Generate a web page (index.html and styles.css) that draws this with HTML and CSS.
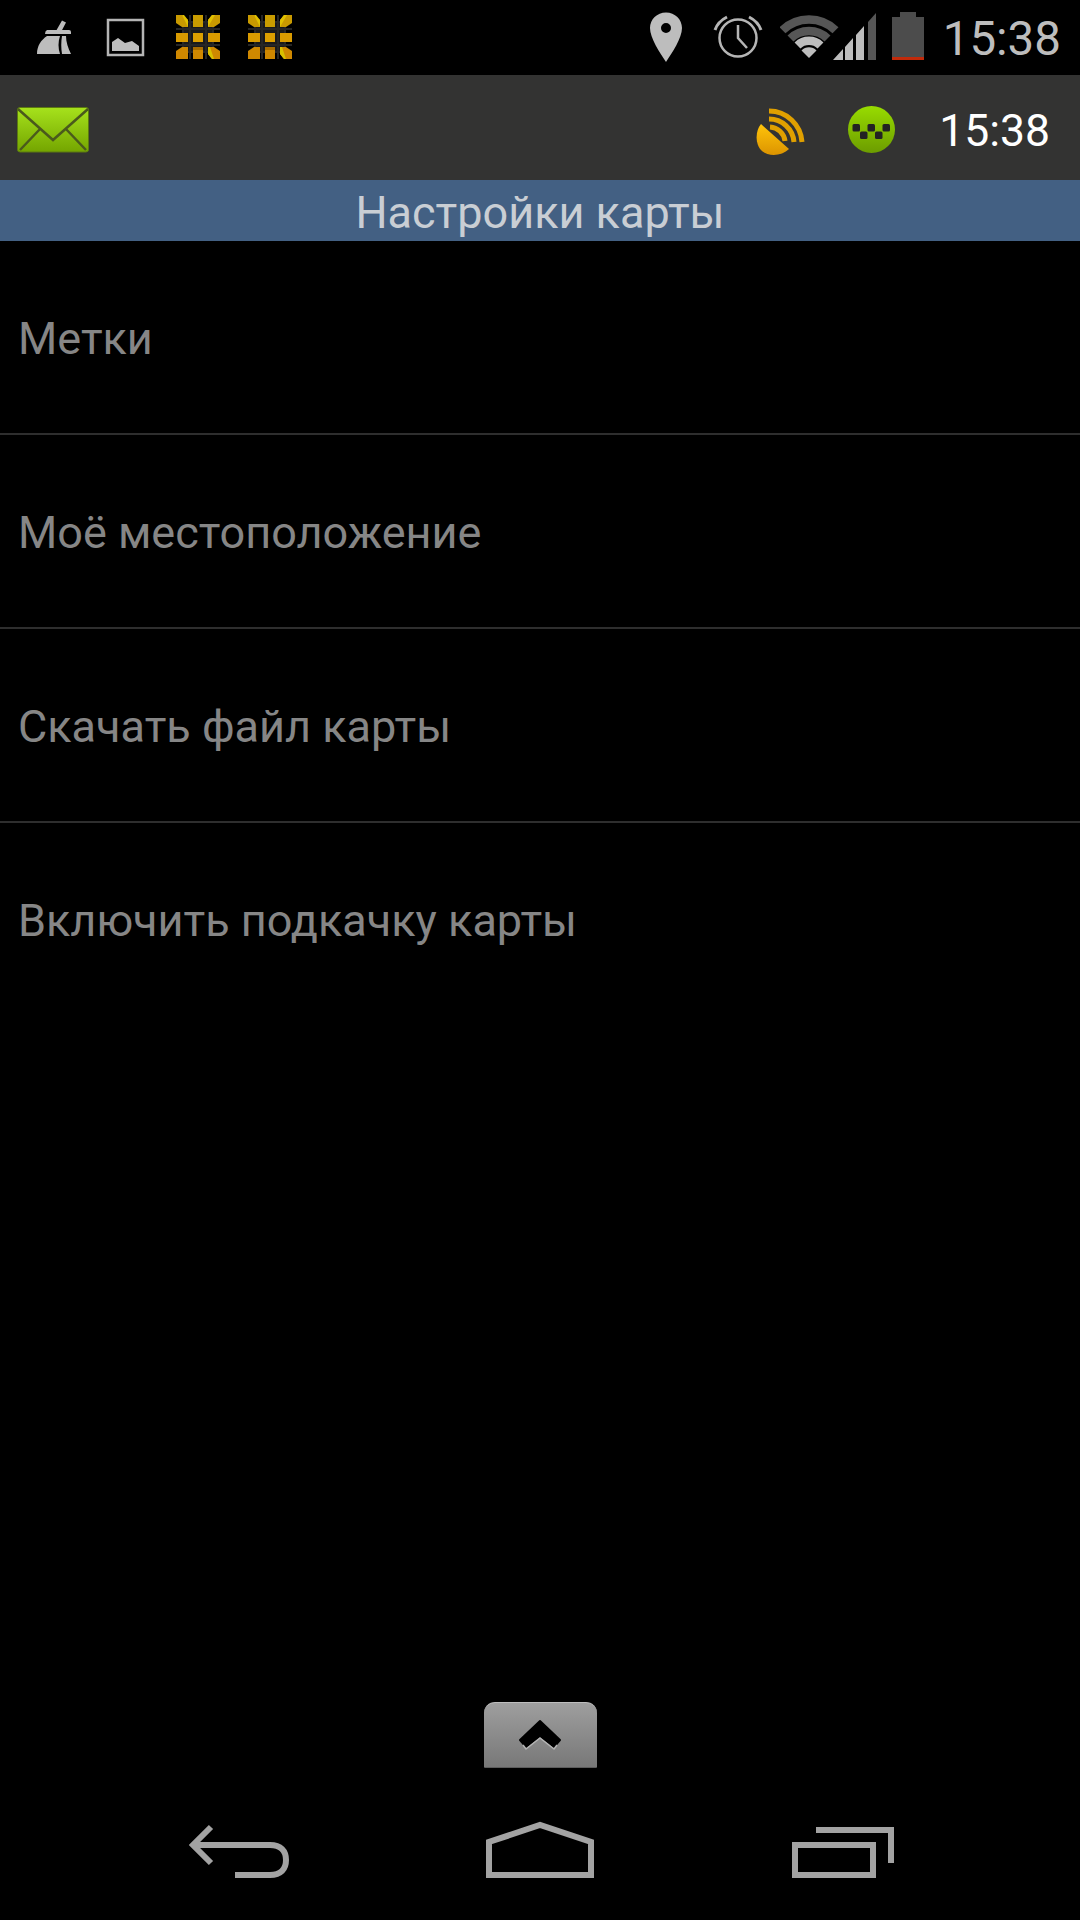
FILE: index.html
```html
<!DOCTYPE html>
<html lang="ru">
<head>
<meta charset="utf-8">
<title>Настройки карты</title>
<link rel="stylesheet" href="styles.css">
</head>
<body>
<svg class="defs" width="0" height="0" aria-hidden="true">
  <defs>
    <linearGradient id="gEnv" x1="0" y1="0" x2="0" y2="1"><stop offset="0" stop-color="#a6e21c"/><stop offset="1" stop-color="#74a500"/></linearGradient>
    <linearGradient id="gTaxi" x1="0" y1="0" x2="0" y2="1"><stop offset="0" stop-color="#98dc00"/><stop offset="1" stop-color="#6c9c00"/></linearGradient>
    <linearGradient id="gSat" x1="0" y1="0" x2="0" y2="1"><stop offset="0" stop-color="#ffc40a"/><stop offset="1" stop-color="#dc9400"/></linearGradient>
    <symbol id="tiles" viewBox="0 0 48 48">
      <path d="M9 9H39V39H9Z M16 2V46 M32 2V46 M2 16H46 M2 32H46" fill="#1a1a1a" stroke="#262626" stroke-width="2"/>
      <path d="M2 2H8L14 7V14H8L2 10Z" fill="#c99a00"/>
      <path d="M8 2H10L14 7V14Z" fill="#e0c000"/>
      <path d="M19 2H29V14H19Z" fill="#c99c00"/>
      <path d="M38 2H46V10L40 14H34V7Z" fill="#c99a00"/>
      <path d="M34 7L38 2H41L34 14Z" fill="#e0c000"/>
      <path d="M2 20H14V29H2Z" fill="#d89a00"/>
      <path d="M19 20H29V29H19Z" fill="#dc9f00"/>
      <path d="M34 20H46V29H34Z" fill="#d89a00"/>
      <path d="M8 34H14V46H2V38Z" fill="#cf8800"/>
      <path d="M19 34H29V46H19Z" fill="#cf8800"/>
      <path d="M19 34H29V37H19Z" fill="#a86c00"/>
      <path d="M34 34H40L46 38V46H38L34 41Z" fill="#cf8800"/>
      <path d="M34 34H36L40 46H38L34 41Z" fill="#d8c000"/>
    </symbol>
  </defs>
</svg>
<div class="screen">
  <header class="status">
    <div class="status-left">
      <svg class="ico w-broom" viewBox="35 0 38 75"><path d="M56 31L62 20.500L66 22.500L61 32Z M47 30H69Q71 30 71 32V34H45Q45 31 47 30Z M47 36H60C58 42 58 48 60 54H37C37 46 41 40 47 36Z M62 36H66C66 42 68 48 71 54H62C61 48 61 42 62 36Z" fill="#bdbdbd"/></svg>
      <svg class="ico w-pic gap-pic" viewBox="105 0 41 75"><rect x="108" y="20" width="35" height="35" fill="none" stroke="#b5b5b5" stroke-width="2.5"/><path d="M112 51V42L118 38L125 43L132 41L139 46V51Z" fill="#bdbdbd"/></svg>
      <svg class="ico w-grid gap-grid1" viewBox="0 -13 48 75"><use href="#tiles" width="48" height="48"/></svg>
      <svg class="ico w-grid gap-grid2" viewBox="0 -13 48 75"><use href="#tiles" width="48" height="48"/></svg>
    </div>
    <div class="status-right">
      <svg class="ico w-pin" viewBox="648 0 36 75"><path fill-rule="evenodd" d="M666 12.5C657 12.5 650 19.500 650 28C650 38 660 53 666 62C672 53 682 38 682 28C682 19.500 675 12.500 666 12.5ZM666 23A5 5 0 1 1 666 33A5 5 0 1 1 666 23Z" fill="#bdbdbd"/></svg>
      <svg class="ico w-alarm gap-alarm" viewBox="710 0 56 75"><g fill="none" stroke="#b5b5b5"><circle cx="738" cy="38" r="18.500" stroke-width="2.500"/><path d="M738 25V38L747 48" stroke-width="2.500"/><path d="M715 30C717 24 721 20 727 17M761 30C759 24 755 20 749 17" stroke-width="3"/></g></svg>
      <svg class="ico w-net gap-net" viewBox="780 0 98 75">
        <g fill="none" stroke-width="8.500">
          <path d="M782.500 30.200A38 38 0 0 1 835.500 30.200" stroke="#565656"/>
          <path d="M790.500 38.500A26.500 26.500 0 0 1 827.500 38.500" stroke="#565656"/>
          <path d="M797.500 45.500A16.500 16.500 0 0 1 820.500 45.500" stroke="#bdbdbd"/>
        </g>
        <path d="M809 58L801.500 50.500A10.500 10.500 0 0 1 816.500 50.500Z" fill="#bdbdbd"/>
        <path d="M833 60L843 49V60Z M845 47L853 38V60H845Z M856 35L864 26V60H856Z" fill="#bdbdbd"/>
        <path d="M868 22L876 13V60H868Z" fill="#565656"/>
      </svg>
      <svg class="ico w-batt gap-batt" viewBox="890 0 36 75"><path d="M900 12H916V17H924V57H892V17H900Z" fill="#4c4c4c"/><rect x="892" y="57" width="32" height="3" fill="#c22a0a"/></svg>
      <span class="status-time">15:38</span>
    </div>
  </header>

  <div class="appbar">
    <svg class="ico w-env" viewBox="15 75 76 105">
      <rect x="17.500" y="107.500" width="71" height="44.500" rx="2.500" fill="url(#gEnv)" stroke="#5c7a10" stroke-width="1"/>
      <path d="M18 109L53 140L88 109M41 128L20 150M65 128L86 150" fill="none" stroke="#4a5a1c" stroke-width="2.500"/>
    </svg>
    <div class="appbar-right">
      <svg class="ico w-sat" viewBox="752 75 56 105">
        <path d="M761 124L789 149C782 156 769 157 762 151C755 145 755 131 761 124Z" fill="url(#gSat)"/>
        <g fill="none" stroke="#e0a000" stroke-width="5">
          <path d="M769 111A33 33 0 0 1 802 142"/>
          <path d="M769 119A25 25 0 0 1 794 142"/>
          <path d="M770 127A16 16 0 0 1 785 141"/>
        </g>
      </svg>
      <svg class="ico w-taxi gap-taxi" viewBox="846 75 51 105">
        <circle cx="871.500" cy="129.500" r="23.500" fill="url(#gTaxi)"/>
        <g fill="#232323">
          <rect x="852.500" y="124" width="7.500" height="7.500" rx="1.500"/>
          <rect x="867.500" y="124" width="7.500" height="7.500" rx="1.500"/>
          <rect x="882.500" y="124" width="7.500" height="7.500" rx="1.500"/>
          <rect x="860" y="131.500" width="7.500" height="7.500" rx="1.500"/>
          <rect x="875" y="131.500" width="7.500" height="7.500" rx="1.500"/>
        </g>
      </svg>
      <span class="appbar-time">15:38</span>
    </div>
  </div>

  <div class="title">Настройки карты</div>

  <main class="list">
    <div class="row">Метки</div>
    <div class="row">Моё местоположение</div>
    <div class="row">Скачать файл карты</div>
    <div class="row">Включить подкачку карты</div>
  </main>

  <div class="handle">
    <svg class="chevron" viewBox="0 0 46 36">
      <path d="M23 5L43 24L37 31L23 20L9 31L3 24Z" fill="#000" stroke="#000" stroke-width="2" stroke-linejoin="round"/>
      <path d="M6 29L9 33L23 22L37 33L40 29" fill="none" stroke="#b4b4b4" stroke-width="1.500" stroke-linejoin="round"/>
    </svg>
  </div>

  <nav class="navbar">
    <svg class="ico w-back" viewBox="188 1815 104 70"><path d="M211 1827L193 1845L211 1863M193 1845H270C281 1845 286 1851 286 1860C286 1869 281 1875 270 1875H235" fill="none" stroke="#a3a3a3" stroke-width="6"/></svg>
    <svg class="ico w-home" viewBox="484 1815 112 70"><path d="M489 1875V1842L540 1825L591 1842V1875Z" fill="none" stroke="#a3a3a3" stroke-width="6"/></svg>
    <svg class="ico w-recent" viewBox="790 1815 106 70"><g fill="none" stroke="#a3a3a3" stroke-width="6"><rect x="795" y="1845" width="78" height="30"/><path d="M816 1830H891V1863"/></g></svg>
  </nav>
</div>
</body>
</html>
```

FILE: styles.css
```css
* { box-sizing: border-box; }
html, body { margin: 0; padding: 0; background: #000; }
body { font-family: Roboto, "Noto Sans", sans-serif; }
.defs { display: block; height: 0; }
.screen { width: 1080px; height: 1920px; display: flex; flex-direction: column; background: #000; overflow: hidden; }
.ico { display: block; flex: none; }

.status { height: 75px; flex: none; display: flex; justify-content: space-between; background: #000; }
.status-left { display: flex; padding-left: 35px; }
.status-right { display: flex; padding-right: 19px; }
.status .ico { height: 75px; }
.w-broom { width: 38px; }
.w-pic { width: 41px; }
.w-grid { width: 48px; }
.w-pin { width: 36px; }
.w-alarm { width: 56px; }
.w-net { width: 98px; }
.w-batt { width: 36px; }
.gap-pic { margin-left: 32px; }
.gap-grid1 { margin-left: 28px; }
.gap-grid2 { margin-left: 24px; }
.gap-alarm { margin-left: 26px; }
.gap-net { margin-left: 14px; }
.gap-batt { margin-left: 12px; }
.status-time { margin-left: 17px; font-size: 47.5px; line-height: 79px; color: #bdbdbd; }

.appbar { height: 105px; flex: none; display: flex; justify-content: space-between; background: #333332; padding-left: 15px; }
.appbar .ico { height: 105px; }
.w-env { width: 76px; }
.appbar-right { display: flex; padding-right: 30px; }
.w-sat { width: 56px; }
.w-taxi { width: 51px; }
.gap-taxi { margin-left: 38px; }
.appbar-time { margin-left: 42px; font-size: 44.5px; line-height: 112px; color: #fff; }

.title { height: 61px; flex: none; background: #436083; color: #c9ced4; font-size: 45px; line-height: 66px; text-align: center; }

.list { flex: 1; }
.row { height: 194px; padding: 0 0 0 18px; font-size: 45px; line-height: 196px; color: #868686; border-bottom: 2px solid #2e2e2e; }
.row:last-child { border-bottom: 0; }

.handle { width: 113px; height: 66px; flex: none; margin: 0 auto 47px; display: flex; justify-content: center; align-items: center; border-radius: 11px 11px 1px 1px; background: linear-gradient(#9e9e9e, #787878); border-top: 1px solid #bdbdbd; border-bottom: 1px solid #5c5c5c; }
.chevron { width: 46px; height: 36px; display: block; margin-top: -2px; }

.navbar { height: 105px; flex: none; display: flex; padding-left: 188px; }
.navbar .ico { height: 70px; }
.w-back { width: 104px; }
.w-home { width: 112px; margin-left: 192px; }
.w-recent { width: 106px; margin-left: 194px; }
```
